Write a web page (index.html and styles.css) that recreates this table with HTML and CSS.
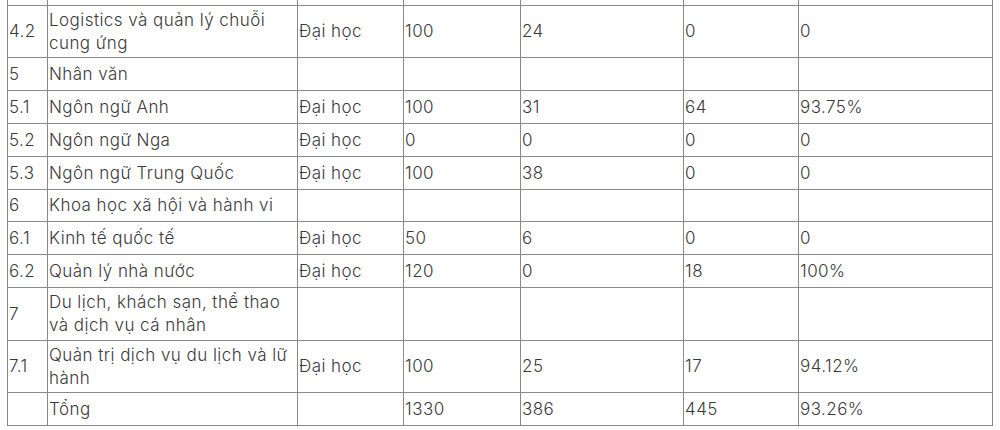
FILE: index.html
```html
<!DOCTYPE html>
<html lang="vi">
<head>
<meta charset="utf-8">
<title>Bảng</title>
<link rel="stylesheet" href="styles.css">
</head>
<body>
<div class="page">
<table class="grid">
<colgroup>
<col class="c1"><col class="c2"><col class="c3"><col class="c4"><col class="c5"><col class="c6"><col class="c7">
</colgroup>
<tbody>
<tr class="h33"><td></td><td></td><td></td><td></td><td></td><td></td><td></td></tr>
<tr class="h52"><td>4.2</td><td>Logistics và quản lý chuỗi cung ứng</td><td>Đại học</td><td>100</td><td>24</td><td>0</td><td>0</td></tr>
<tr class="h33"><td>5</td><td>Nhân văn</td><td></td><td></td><td></td><td></td><td></td></tr>
<tr class="h33"><td>5.1</td><td>Ngôn ngữ Anh</td><td>Đại học</td><td>100</td><td>31</td><td>64</td><td>93.75%</td></tr>
<tr class="h33"><td>5.2</td><td>Ngôn ngữ Nga</td><td>Đại học</td><td>0</td><td>0</td><td>0</td><td>0</td></tr>
<tr class="h33"><td>5.3</td><td>Ngôn ngữ Trung Quốc</td><td>Đại học</td><td>100</td><td>38</td><td>0</td><td>0</td></tr>
<tr class="h32"><td>6</td><td>Khoa học xã hội và hành vi</td><td></td><td></td><td></td><td></td><td></td></tr>
<tr class="h33"><td>6.1</td><td>Kinh tế quốc tế</td><td>Đại học</td><td>50</td><td>6</td><td>0</td><td>0</td></tr>
<tr class="h33"><td>6.2</td><td>Quản lý nhà nước</td><td>Đại học</td><td>120</td><td>0</td><td>18</td><td>100%</td></tr>
<tr class="h53"><td>7</td><td>Du lịch, khách sạn, thể thao và dịch vụ cá nhân</td><td></td><td></td><td></td><td></td><td></td></tr>
<tr class="h52"><td>7.1</td><td>Quản trị dịch vụ du lịch và lữ hành</td><td>Đại học</td><td>100</td><td>25</td><td>17</td><td>94.12%</td></tr>
<tr class="h33"><td></td><td>Tổng</td><td></td><td>1330</td><td>386</td><td>445</td><td>93.26%</td></tr>
</tbody>
</table>
</div>
</body>
</html>
```
FILE: styles.css
```css
html, body {
  margin: 0;
  padding: 0;
  background: #ffffff;
  overflow: hidden;
}
.page {
  padding-left: 7px;
}
.grid {
  margin-top: -28px;
  border-collapse: collapse;
  table-layout: fixed;
  width: 985px;
  font-family: Inter, "Noto Sans", sans-serif;
  font-weight: 300;
  font-size: 17px;
  letter-spacing: 0.45px;
  line-height: 23px;
  color: #3a3a3a;
}
.c1 { width: 40px; }
.c2 { width: 250px; }
.c3 { width: 106px; }
.c4 { width: 117px; }
.c5 { width: 163px; }
.c6 { width: 115px; }
.c7 { width: 194px; }
.grid td {
  border: 1px solid #8a8a8a;
  padding: 0 1px;
  vertical-align: middle;
  text-align: left;
}
.h32 td { height: 31px; }
.h33 td { height: 32px; }
.h52 td { height: 51px; }
.h53 td { height: 52px; }
```
